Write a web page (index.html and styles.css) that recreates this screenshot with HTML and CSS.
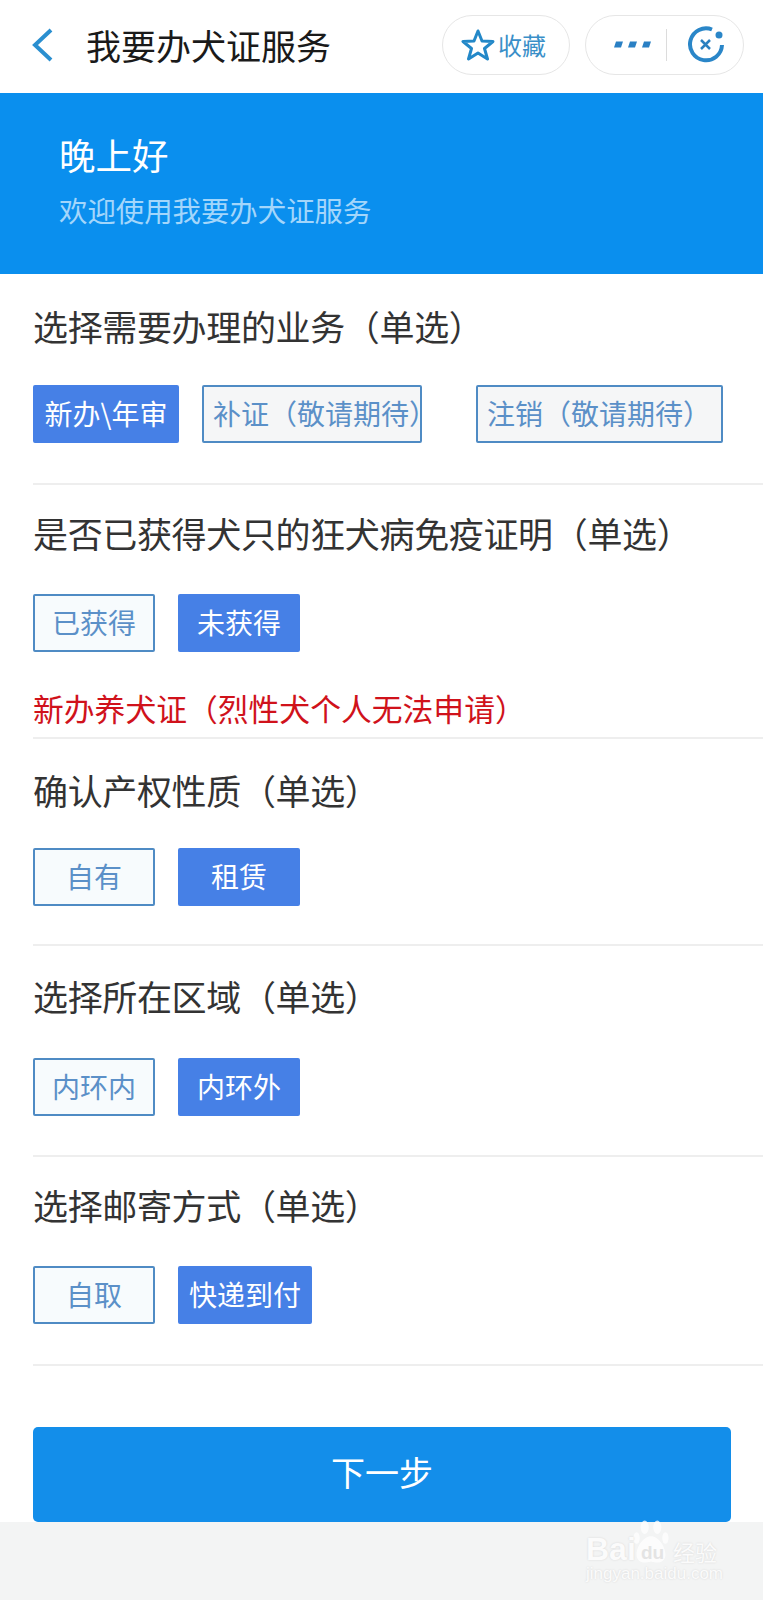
FILE: index.html
```html
<!DOCTYPE html>
<html lang="zh-CN">
<head>
    <meta charset="UTF-8">
    <title>我要办犬证服务</title>
    <link rel="stylesheet" href="styles.css">
</head>
<body>
    <div id="page">
        <div class="nav">
            <svg class="back" width="26" height="34" viewBox="0 0 26 34"><path d="M21 2 L5 17 L21 32" fill="none" stroke="#2a8fd0" stroke-width="4"/></svg>
            <div class="nav-title">我要办犬证服务</div>
            <div class="pill pill-fav">
                <svg width="34" height="34" viewBox="0 0 34 34"><path d="M17 3 L21 13 L32 13.500 L23.500 20.500 L26.500 31 L17 25 L7.500 31 L10.500 20.500 L2 13.500 L13 13 Z" fill="none" stroke="#2388c8" stroke-width="3" stroke-linejoin="round"/></svg>
                <span>收藏</span>
            </div>
            <div class="pill pill-menu">
                <svg width="38" height="10" viewBox="0 0 38 10"><path d="M3 1.500 H10 L8 7.500 H1 Z M17 1.500 H24 L22 7.500 H15 Z M31 1.500 H38 L36 7.500 H29 Z" fill="#2a80c4"/></svg>
                <i class="pill-line"></i>
                <svg width="38" height="38" viewBox="0 0 38 38"><path d="M25 3.500 A16 16 0 1 0 35 19" fill="none" stroke="#2a86c8" stroke-width="4"/><circle cx="32" cy="9" r="3.500" fill="#2a86c8"/><path d="M14 14 L23 23 M23 14 L14 23" stroke="#2a80c0" stroke-width="2.500"/></svg>
            </div>
        </div>

        <div class="banner">
            <div class="hello">晚上好</div>
            <div class="welcome">欢迎使用我要办犬证服务</div>
        </div>

        <div class="main">
            <div class="sec sec-1">
                <div class="sec-title">选择需要办理的业务（单选）</div>
                <div class="opts">
                    <div class="opt on w146">新办\年审</div>
                    <div class="opt off w220">补证（敬请期待）</div>
                    <div class="opt off w247">注销（敬请期待）</div>
                </div>
            </div>
            <div class="sec sec-2">
                <div class="sec-title">是否已获得犬只的狂犬病免疫证明（单选）</div>
                <div class="opts">
                    <div class="opt">已获得</div>
                    <div class="opt on">未获得</div>
                </div>
                <div class="tip">新办养犬证（烈性犬个人无法申请）</div>
            </div>
            <div class="sec sec-3">
                <div class="sec-title">确认产权性质（单选）</div>
                <div class="opts">
                    <div class="opt">自有</div>
                    <div class="opt on">租赁</div>
                </div>
            </div>
            <div class="sec sec-4">
                <div class="sec-title">选择所在区域（单选）</div>
                <div class="opts">
                    <div class="opt">内环内</div>
                    <div class="opt on">内环外</div>
                </div>
            </div>
            <div class="sec sec-5">
                <div class="sec-title">选择邮寄方式（单选）</div>
                <div class="opts">
                    <div class="opt">自取</div>
                    <div class="opt on w134">快递到付</div>
                </div>
            </div>
            <div class="next">下一步</div>
        </div>

        <div class="footer"></div>

        <div class="mark">
            <svg class="paw" width="36" height="45" viewBox="0 0 40 50"><g fill="#fff" opacity="0.75"><ellipse cx="13" cy="8" rx="4.500" ry="7.500"/><ellipse cx="27" cy="8" rx="4.500" ry="7.500"/><ellipse cx="4" cy="20" rx="3.500" ry="6.500"/><ellipse cx="36" cy="20" rx="3.500" ry="6.500"/><path d="M20 18 C29 18 37 31 36 40 C34 49 26 48 20 46 C14 48 6 49 4 40 C3 31 11 18 20 18 Z"/></g></svg>
            <div class="mark-bai">Bai</div>
            <div class="mark-du">du</div>
            <div class="mark-cn">经验</div>
            <div class="mark-url">jingyan.baidu.com</div>
        </div>
    </div>
</body>
</html>
```

FILE: styles.css
```css
*{
    margin: 0px;
    padding: 0px;
    box-sizing: border-box;
}
body{
    background: #fff;
    font-family: "Noto Sans CJK SC", "Noto Sans", sans-serif;
}
#page{
    position: relative;
    width: 763px;
    height: 1600px;
    overflow: hidden;
    background: #fff;
}

.nav{
    display: flex;
    align-items: center;
    height: 93px;
    padding: 0 19px 4px 30px;
}
.back{
    flex: none;
}
.nav-title{
    flex: 1;
    margin-left: 30px;
    font-size: 35px;
    line-height: 50px;
    color: #1a1a1a;
}
.pill{
    display: flex;
    align-items: center;
    height: 60px;
    border: 1px solid #e6e6e6;
    border-radius: 30px;
}
.pill-fav{
    width: 128px;
    padding-left: 18px;
    gap: 3px;
    font-size: 24px;
    color: #3a8fc8;
}
.pill-menu{
    width: 159px;
    margin-left: 15px;
    padding-left: 27px;
}
.pill-line{
    width: 1px;
    height: 32px;
    margin: 0 20px 0 15px;
    background: #dcdcdc;
}

.banner{
    height: 181px;
    padding: 37px 0 0 59px;
    background: #0a8fee;
}
.hello{
    font-size: 36.500px;
    line-height: 50px;
    color: #fff;
}
.welcome{
    margin-top: 10px;
    font-size: 28.400px;
    line-height: 40px;
    color: #a3d6fb;
}

.main{
    padding-left: 33px;
}
.sec{
    padding-top: 28px;
    padding-bottom: 40px;
    border-bottom: 2px solid #eeeeee;
}
.sec-1{
    padding-top: 29px;
}
.sec-2{
    padding-top: 25px;
    padding-bottom: 7px;
}
.sec-3{
    padding-bottom: 38px;
}
.sec-4{
    padding-top: 27px;
    padding-bottom: 39px;
}
.sec-5{
    padding-top: 25px;
}
.sec-title{
    font-size: 35px;
    letter-spacing: -0.350px;
    line-height: 46px;
    color: #333;
}
.opts{
    display: flex;
    margin-top: 36px;
    gap: 23px;
}
.sec-2 .opts{
    margin-top: 38px;
}
.sec-3 .opts{
    margin-top: 35px;
}
.sec-4 .opts{
    margin-top: 39px;
}
.sec-5 .opts{
    margin-top: 38px;
}
.opt{
    width: 122px;
    height: 58px;
    border: 2px solid #4f8bc4;
    border-radius: 2px;
    background: #f7fbfd;
    font-size: 28px;
    line-height: 53px;
    text-align: center;
    white-space: nowrap;
    color: #5b90c8;
}
.opt.on{
    border-color: #4680e6;
    background: #4680e6;
    color: #fff;
}
.opt.off{
    background: #f5f6f7;
    text-align: left;
    padding-left: 9px;
}
.w134{
    width: 134px;
}
.w146{
    width: 146px;
}
.w220{
    width: 220px;
}
.w247{
    width: 247px;
    margin-left: 31px;
}
.tip{
    margin-top: 34px;
    font-size: 30.800px;
    line-height: 44px;
    color: #d0121b;
}

.next{
    width: 698px;
    height: 95px;
    margin-top: 61px;
    border-radius: 5px;
    background: #138eea;
    font-size: 34px;
    line-height: 90px;
    text-align: center;
    color: #fff;
}
.footer{
    height: 96px;
    background: #f3f4f4;
}

/* 右下角水印 */
.mark{
    position: absolute;
    left: 586px;
    top: 1516px;
    width: 140px;
    height: 80px;
    color: #fbfbfb;
    text-shadow: 0 0 2px #d4d4d4;
    font-family: "Liberation Sans", sans-serif;
    white-space: nowrap;
}
.paw{
    position: absolute;
    left: 47px;
    top: 4px;
}
.mark-bai{
    position: absolute;
    left: 0;
    top: 19px;
    font-size: 32px;
    line-height: 28px;
    font-weight: bold;
}
.mark-du{
    position: absolute;
    left: 55px;
    top: 27px;
    font-size: 19px;
    line-height: 20px;
    font-weight: bold;
    color: #e4e4e4;
    text-shadow: none;
}
.mark-cn{
    position: absolute;
    left: 87px;
    top: 23px;
    font-family: "Noto Sans CJK SC", sans-serif;
    font-size: 22px;
    line-height: 24px;
}
.mark-url{
    position: absolute;
    left: 0;
    top: 48px;
    font-size: 17px;
    line-height: 20px;
}
```
